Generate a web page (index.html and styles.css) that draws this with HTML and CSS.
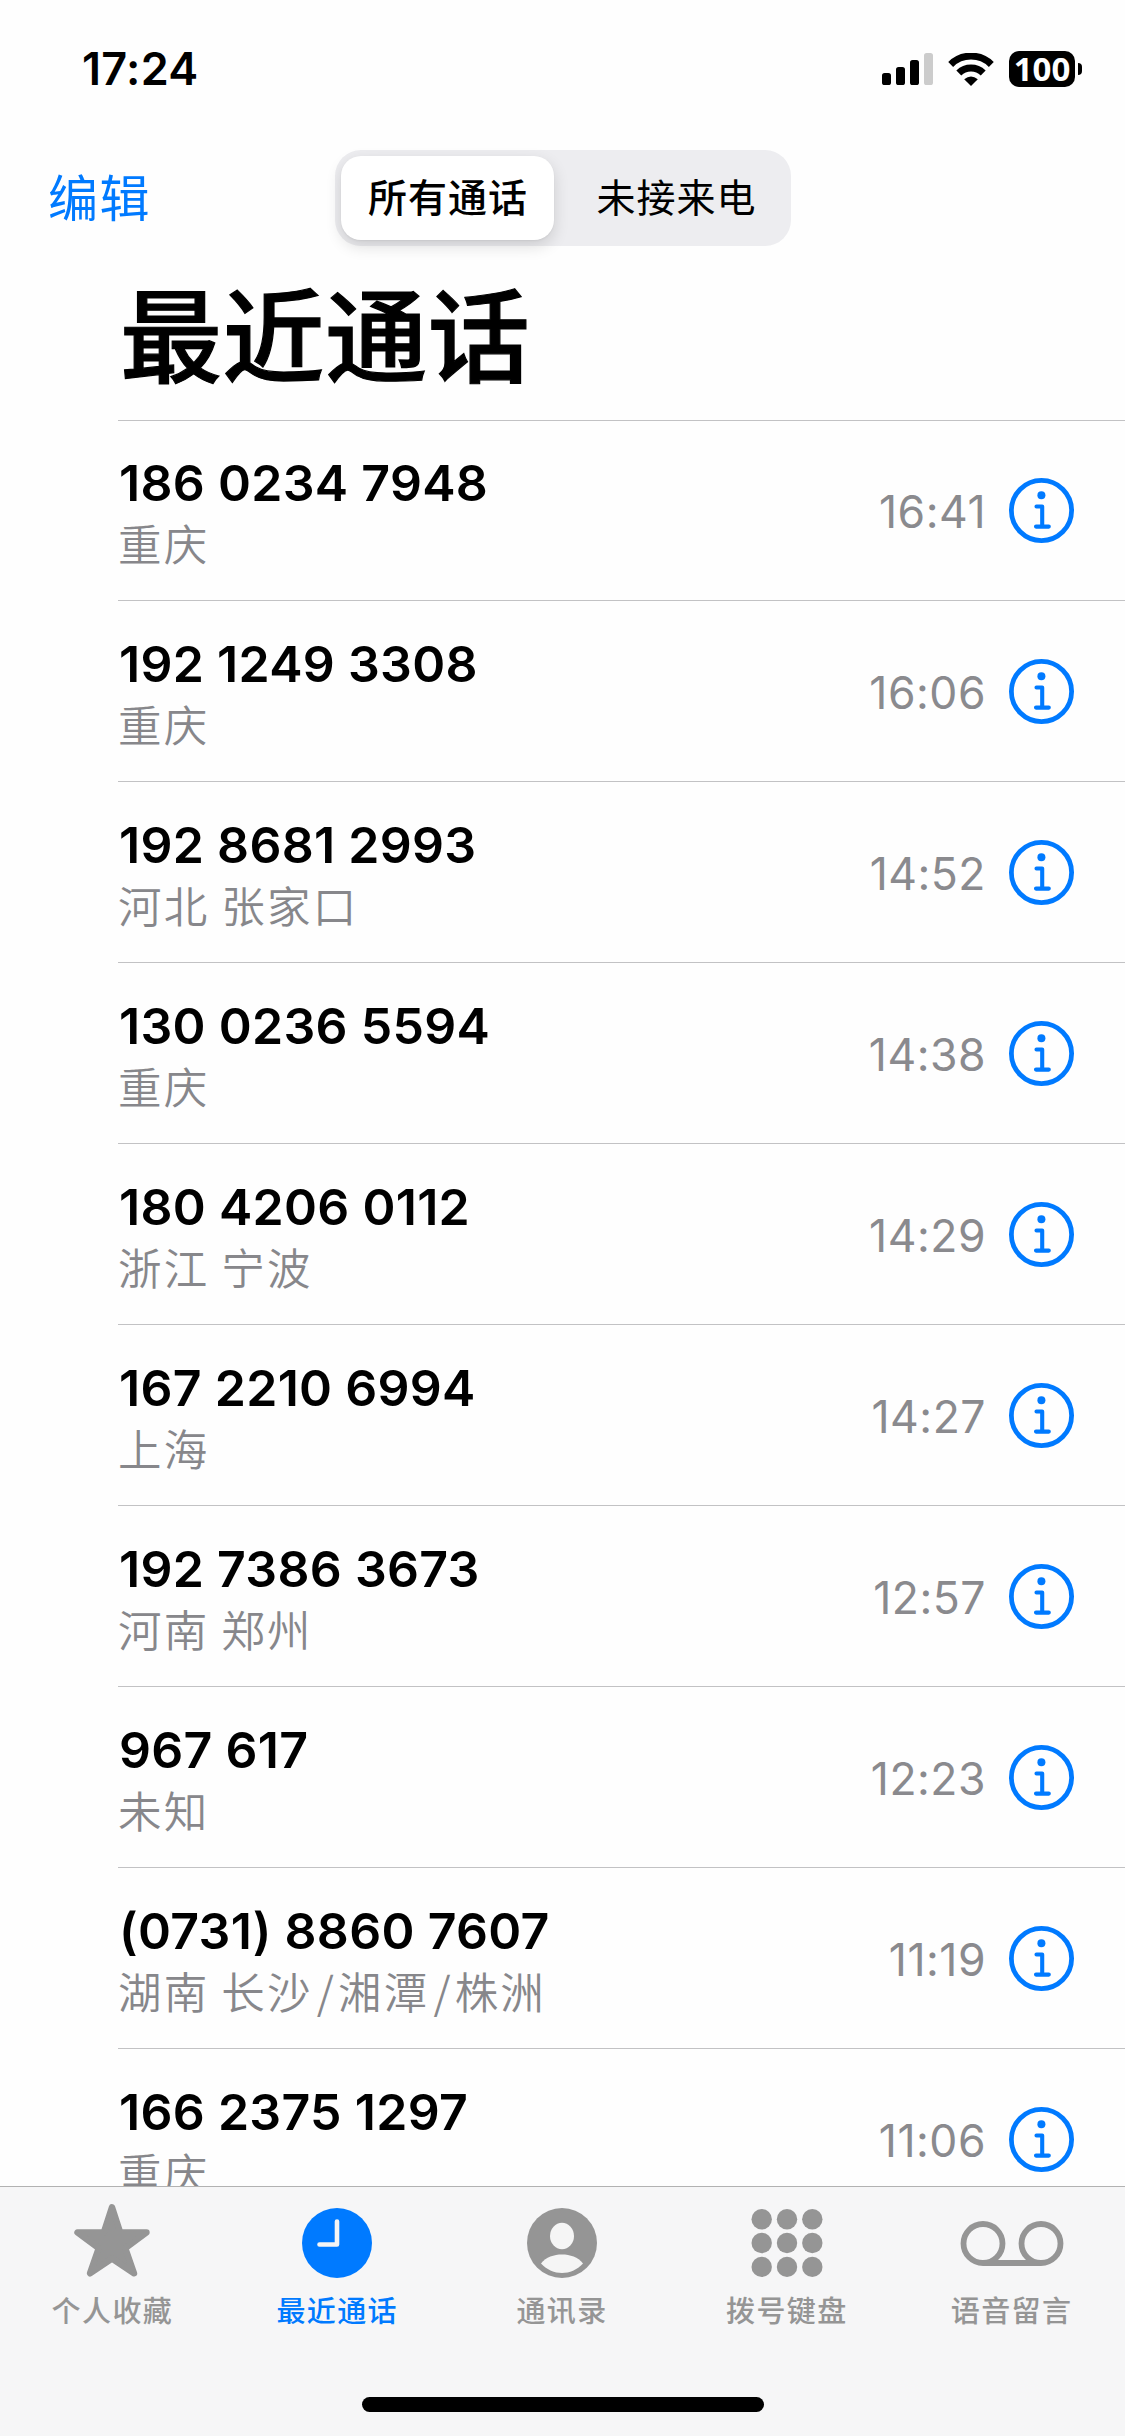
FILE: index.html
```html
<!DOCTYPE html>
<html lang="zh-CN">
<head>
<meta charset="utf-8">
<title>最近通话</title>
<link rel="stylesheet" href="styles.css">
</head>
<body>
<svg class="sprite" width="0" height="0" aria-hidden="true">
  <symbol id="info" viewBox="0 0 65 65">
    <circle cx="32.5" cy="32.5" r="30.1" fill="none" stroke="#007aff" stroke-width="4.8"/>
    <circle cx="32.4" cy="17.3" r="4" fill="#007aff"/>
    <path d="M27.500 28.500H33.200V48.500M27 48.600H39.800" fill="none" stroke="#007aff" stroke-width="4.100" stroke-linecap="round" stroke-linejoin="round"/>
  </symbol>
</svg>
<div class="screen">
  <header class="status">
    <span class="clock">17:24</span>
    <div class="indicators">
      <svg class="signal" viewBox="0 0 52 33" width="52" height="33"><rect x="0" y="20" width="9" height="12" rx="2.6"/><rect x="14" y="14" width="9" height="18" rx="2.6"/><rect x="28" y="7" width="9" height="25" rx="2.6"/><rect x="42" y="0" width="9" height="32" rx="2.6" fill="#ccc"/></svg>
      <svg class="wifi" viewBox="0 0 46 33" width="46" height="33"><g fill="none" stroke="#000" stroke-width="7"><path d="M2.700 11.400A29 29 0 0 1 43.300 11.400"/><path d="M10.800 19.900A17.400 17.400 0 0 1 35.200 19.900"/></g><path d="M16.200 26.200Q23 20.600 29.800 26.200L23 33Z"/></svg>
      <div class="battery"><span class="level">100</span><i class="cap"></i></div>
    </div>
  </header>
  <nav class="nav">
    <a class="edit">编辑</a>
    <div class="segments"><span class="segment active">所有通话</span><span class="segment">未接来电</span></div>
  </nav>
  <h1 class="title">最近通话</h1>
  <main class="calls">
    <div class="call"><div class="who"><b>186 0234 7948</b><span>重庆</span></div><time>16:41</time><svg class="info"><use href="#info"/></svg></div>
    <div class="call"><div class="who"><b>192 1249 3308</b><span>重庆</span></div><time>16:06</time><svg class="info"><use href="#info"/></svg></div>
    <div class="call"><div class="who"><b>192 8681 2993</b><span>河北 张家口</span></div><time>14:52</time><svg class="info"><use href="#info"/></svg></div>
    <div class="call"><div class="who"><b>130 0236 5594</b><span>重庆</span></div><time>14:38</time><svg class="info"><use href="#info"/></svg></div>
    <div class="call"><div class="who"><b>180 4206 0112</b><span>浙江 宁波</span></div><time>14:29</time><svg class="info"><use href="#info"/></svg></div>
    <div class="call"><div class="who"><b>167 2210 6994</b><span>上海</span></div><time>14:27</time><svg class="info"><use href="#info"/></svg></div>
    <div class="call"><div class="who"><b>192 7386 3673</b><span>河南 郑州</span></div><time>12:57</time><svg class="info"><use href="#info"/></svg></div>
    <div class="call"><div class="who"><b>967 617</b><span>未知</span></div><time>12:23</time><svg class="info"><use href="#info"/></svg></div>
    <div class="call"><div class="who"><b>(0731) 8860 7607</b><span>湖南 长沙<i class="slash">/</i>湘潭<i class="slash">/</i>株洲</span></div><time>11:19</time><svg class="info"><use href="#info"/></svg></div>
    <div class="call"><div class="who"><b>166 2375 1297</b><span>重庆</span></div><time>11:06</time><svg class="info"><use href="#info"/></svg></div>
  </main>
  <footer class="dock">
    <div class="tabs">
      <a class="tab"><svg viewBox="0 0 110 80" width="110" height="80"><path d="M55 7.200L63.200 32.400L89.500 32.400L68.300 48.300L77 73.300L55 58.500L33 73.300L41.700 48.300L20.500 32.400L46.800 32.400Z" fill="currentColor" stroke="currentColor" stroke-width="6.400" stroke-linejoin="round"/></svg><span>个人收藏</span></a>
      <a class="tab current"><svg viewBox="0 0 110 80" width="110" height="80"><circle cx="55" cy="43" r="35" fill="currentColor"/><path d="M55 21.500V44.500H37.500" fill="none" stroke="#f5f5f5" stroke-width="4.600" stroke-linecap="round" stroke-linejoin="round"/></svg><span>最近通话</span></a>
      <a class="tab"><svg viewBox="0 0 110 80" width="110" height="80"><circle cx="55" cy="43" r="35" fill="currentColor"/><ellipse cx="55" cy="36" rx="12" ry="13.200" fill="#f5f5f5"/><path d="M34 63.500C39 57 47 54.500 55 54.500S71 57 76 63.500C70 70 62.500 73 55 73S40 70 34 63.500Z" fill="#f5f5f5"/></svg><span>通讯录</span></a>
      <a class="tab"><svg viewBox="0 0 110 80" width="110" height="80" fill="currentColor"><circle cx="29.700" cy="19.200" r="10.200"/><circle cx="55" cy="19.200" r="10.200"/><circle cx="80.300" cy="19.200" r="10.200"/><circle cx="29.700" cy="43" r="10.200"/><circle cx="55" cy="43" r="10.200"/><circle cx="80.300" cy="43" r="10.200"/><circle cx="29.700" cy="66.900" r="10.200"/><circle cx="55" cy="66.900" r="10.200"/><circle cx="80.300" cy="66.900" r="10.200"/></svg><span>拨号键盘</span></a>
      <a class="tab"><svg viewBox="0 0 110 80" width="110" height="80" fill="none" stroke="currentColor" stroke-width="5.800"><circle cx="26" cy="43.500" r="19.500"/><circle cx="84" cy="43.500" r="19.500"/><path d="M26 63H84"/></svg><span>语音留言</span></a>
    </div>
    <div class="home"></div>
  </footer>
</div>
</body>
</html>
```
FILE: styles.css
```css
* { box-sizing: border-box; }
body { margin: 0; background: #fff; color: #000; font-family: Inter, "Noto Sans CJK SC", sans-serif; }
.sprite { display: block; }
.screen { width: 1125px; height: 2436px; overflow: hidden; display: flex; flex-direction: column; background: #fefefe; }

.status { height: 150px; flex: none; display: flex; justify-content: space-between; padding: 0 43px 0 82px; }
.clock { font-size: 45px; font-weight: 600; line-height: 56px; padding-top: 41px; letter-spacing: .3px; }
.indicators { display: flex; gap: 14px; padding-top: 53px; align-items: flex-start; }
.battery { display: flex; align-items: center; gap: 3px; margin: -2px 0 0 1px; }
.level { width: 66px; height: 36px; border-radius: 10px; background: #000; color: #fff; font: 700 33px/36px "Noto Sans", sans-serif; text-align: center; }
.cap { width: 4px; height: 12px; background: #000; border-radius: 0 6px 6px 0; }

.nav { height: 96px; flex: none; display: flex; padding-left: 48px; }
.edit { width: 287px; color: #007aff; font-size: 50px; line-height: 98px; letter-spacing: 1.5px; }
.segments { width: 456px; height: 96px; display: flex; padding: 6px; background: #ededf0; border-radius: 26px; }
.segment { flex: 1; padding-left: 14px; text-align: center; font-size: 39px; line-height: 84px; letter-spacing: 1px; }
.segment.active { flex: none; width: 213px; padding-left: 1px; background: #fff; border-radius: 20px; font-weight: 500; box-shadow: 0 6px 16px rgba(0,0,0,.14), 0 1px 2px rgba(0,0,0,.05); }

.title { flex: none; margin: 0 0 0 120px; padding-top: 5px; height: 174px; font-size: 102px; font-weight: 500; line-height: 174px; letter-spacing: .6px; -webkit-text-stroke: 1.2px #000; }

.calls { flex: none; height: 1766px; margin-left: 118px; overflow: hidden; }
.call { height: 181px; display: flex; border-top: 1px solid #c2c2c4; padding: 1px 51px 0 0; }
.call:first-child { height: 180px; padding-top: 0; }
.who { flex: 1; padding: 31px 0 0 1px; display: flex; flex-direction: column; }
.who b { font-size: 50px; line-height: 62px; font-weight: 600; white-space: pre; letter-spacing: .3px; }
.who span { margin: -2px 0 0 -1px; font-family: "Noto Sans CJK SC", sans-serif; font-weight: 350; font-size: 43.5px; line-height: 62px; letter-spacing: 2.2px; color: #87878b; }
.slash { font-style: normal; margin: 0 2px 0 4px; }
time { font-size: 44.5px; line-height: 60px; padding-top: 61px; color: #8a8a8e; letter-spacing: .5px; }
.info { width: 65px; height: 65px; margin: 57px 0 0 23px; flex: none; }

.dock { flex: none; height: 250px; border-top: 1px solid #b2b2b2; background: #f6f6f7; display: flex; flex-direction: column; align-items: center; }
.tabs { display: flex; width: 1125px; height: 210px; padding: 13px 1px 0 0; }
.tab { flex: 1; display: flex; flex-direction: column; align-items: center; color: #959595; font-size: 29px; line-height: 42px; font-weight: 500; letter-spacing: 1.4px; gap: 11px; }
.tab.current { color: #007aff; }
.home { width: 402px; height: 15px; border-radius: 8px; background: #000; }
```
